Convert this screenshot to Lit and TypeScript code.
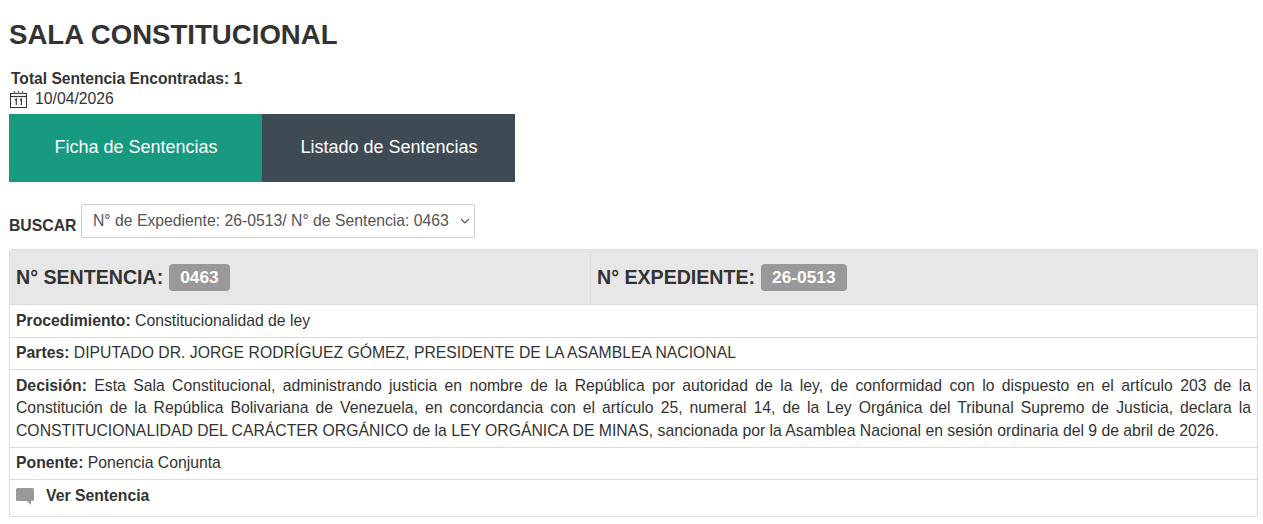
import { LitElement, html, css } from "lit";
import { customElement } from "lit/decorators.js";

@customElement("app-root")
class AppRoot extends LitElement {
  render() {
    return html`
      <h2 class="title">SALA CONSTITUCIONAL</h2>
      <div class="total">Total Sentencia Encontradas: 1</div>
      <div class="date">
        <svg width="19" height="18" viewBox="0 0 19 18" fill="none" stroke="#333">
          <rect x="1.5" y="3.5" width="16" height="14"></rect>
          <path d="M1.5 6.5h16" stroke-width="1.2"></path>
          <path d="M5.5 1v3M9.5 1v3M13.5 1v3" stroke="#666" stroke-width="1.4"></path>
          <path d="M6 10l1.3-1v6M11 10l1.3-1v6" stroke-width="1.2"></path>
        </svg>
        <span>10/04/2026</span>
      </div>
      <div class="tabs">
        <a class="tab active">Ficha de Sentencias</a>
        <a class="tab">Listado de Sentencias</a>
      </div>
      <div class="search">
        <label>BUSCAR</label>
        <select>
          <option>N° de Expediente: 26-0513/ N° de Sentencia: 0463</option>
        </select>
      </div>
      <div class="table">
        <div class="head">
          <div class="cell">N° SENTENCIA: <span class="badge">0463</span></div>
          <div class="cell">N° EXPEDIENTE: <span class="badge">26-0513</span></div>
        </div>
        <div class="row"><b>Procedimiento:</b> Constitucionalidad de ley</div>
        <div class="row"><b>Partes:</b> DIPUTADO DR. JORGE RODRÍGUEZ GÓMEZ, PRESIDENTE DE LA ASAMBLEA NACIONAL</div>
        <div class="row just"><b>Decisión:</b> Esta Sala Constitucional, administrando justicia en nombre de la República por autoridad de la ley, de conformidad con lo dispuesto en el artículo 203 de la Constitución de la República Bolivariana de Venezuela, en concordancia con el artículo 25, numeral 14, de la Ley Orgánica del Tribunal Supremo de Justicia, declara la CONSTITUCIONALIDAD DEL CARÁCTER ORGÁNICO de la LEY ORGÁNICA DE MINAS, sancionada por la Asamblea Nacional en sesión ordinaria del 9 de abril de 2026.</div>
        <div class="row"><b>Ponente:</b> Ponencia Conjunta</div>
        <div class="row link">
          <svg width="18" height="17" viewBox="0 0 18 17" fill="#999">
            <path d="M1.5 0h15A1.5 1.5 0 0 1 18 1.5v10a1.5 1.5 0 0 1-1.5 1.5H15v4l-4-4H1.5A1.5 1.5 0 0 1 0 11.5v-10A1.5 1.5 0 0 1 1.5 0z"></path>
          </svg>
          <b>Ver Sentencia</b>
        </div>
      </div>
    `;
  }

  static styles = css`
    :host {
      display: block;
      padding: 0 5px 0 9px;
      font-family: "Liberation Sans", Arial, sans-serif;
      font-size: 15.75px;
      line-height: 20px;
      color: #333;
    }
    .title {
      margin: 0;
      padding-top: 20px;
      font-size: 27.6px;
      line-height: 30px;
      font-weight: bold;
    }
    .total {
      margin: 19px 0 0 2px;
      font-size: 15.6px;
      font-weight: bold;
      height: 20px;
    }
    .date {
      display: flex;
      align-items: center;
      gap: 7px;
      height: 20px;
    }
    .tabs {
      display: flex;
      margin-top: 5px;
    }
    .tab {
      box-sizing: border-box;
      width: 253px;
      height: 68px;
      padding: 0 0 2px 1px;
      display: flex;
      align-items: center;
      justify-content: center;
      color: #fff;
      font-size: 18px;
      background: #3e4a54;
    }
    .tab.active {
      background: #189a80;
    }
    .search {
      display: flex;
      align-items: flex-end;
      gap: 4px;
      margin-top: 22px;
    }
    .search label {
      font-weight: bold;
      line-height: 24px;
      width: 68px;
      white-space: nowrap;
    }
    select {
      appearance: none;
      box-sizing: border-box;
      height: 34px;
      width: 394px;
      padding: 0 11px 2px;
      font-family: inherit;
      font-size: 15.75px;
      color: #555;
      background: #fff url("data:image/svg+xml,%3Csvg xmlns='http://www.w3.org/2000/svg' width='10' height='6'%3E%3Cpath d='M1 1l4 4 4-4' fill='none' stroke='%23555' stroke-width='1.1'/%3E%3C/svg%3E") no-repeat right 4px center;
      border: 1px solid #ccc;
      border-radius: 2px;
    }
    .table {
      margin-top: 11px;
      border: 1px solid #ddd;
      border-radius: 2px;
    }
    .head {
      display: grid;
      grid-template-columns: 580px 1fr;
      background: #e7e7e7;
      height: 54px;
      font-size: 19.6px;
      font-weight: bold;
    }
    .cell {
      display: flex;
      align-items: center;
      gap: 6px;
      padding-left: 6px;
    }
    .cell + .cell {
      border-left: 1px solid #ddd;
    }
    .badge {
      background: #999;
      color: #fff;
      font-size: 17.3px;
      line-height: 17px;
      padding: 5px 11px;
      border-radius: 4px;
    }
    .row {
      border-top: 1px solid #ddd;
      padding: 4.5px 6px;
      line-height: 22.5px;
    }
    .just {
      text-align: justify;
    }
    .link {
      display: flex;
      align-items: center;
      gap: 12px;
      height: 22px;
      padding-top: 5.5px;
      padding-bottom: 8.5px;
    }
  `;
}

export default AppRoot;
